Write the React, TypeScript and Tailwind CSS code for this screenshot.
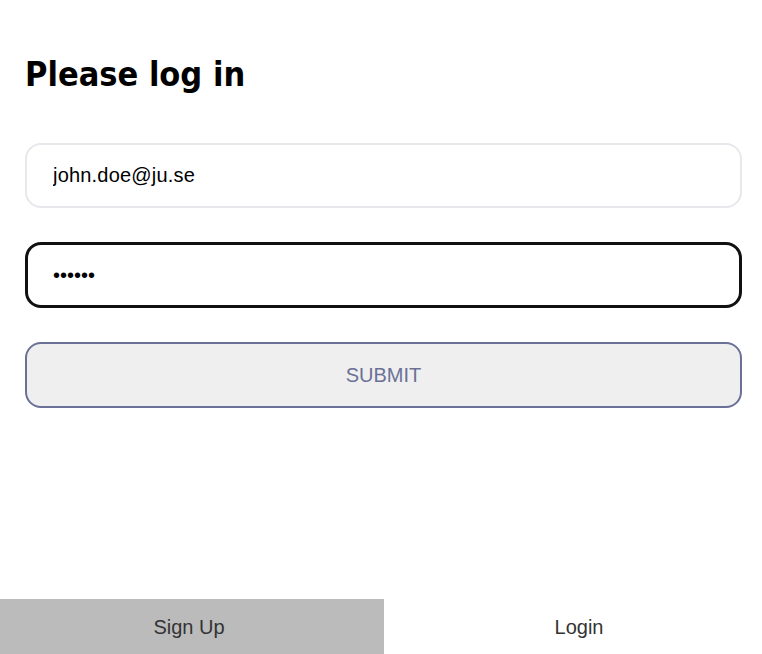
import React, { useState } from 'react'

export default function App() {
  const [email, setEmail] = useState('john.doe@ju.se')
  const [password, setPassword] = useState('secret')
  const [tab, setTab] = useState<'signup' | 'login'>('login')

  return (
    <div className="flex h-[654px] w-[762px] flex-col bg-white font-['Liberation_Sans',Arial,sans-serif]">
      <form
        className="flex flex-1 flex-col pl-[25px] pr-[20px]"
        onSubmit={(e) => {
          e.preventDefault()
        }}
      >
        <h1 className="mt-[52px] font-['DejaVu_Sans_Condensed','DejaVu_Sans',sans-serif] text-[34px] font-bold leading-[44px] text-black">
          Please log in
        </h1>

        <input
          type="email"
          value={email}
          onChange={(e) => setEmail(e.target.value)}
          className="mt-[47px] h-[65px] w-full rounded-[16px] border-2 border-[#e8e8ec] bg-white px-[26px] text-[20px] tracking-[0.2px] text-black outline-none"
        />
        <input
          type="password"
          value={password}
          onChange={(e) => setPassword(e.target.value)}
          className="mt-[34px] h-[66px] w-full rounded-[16px] border-[3px] border-[#111] bg-white px-[25px] text-[20px] text-black outline-none"
        />
        <button
          type="submit"
          className="mt-[34px] h-[66px] w-full rounded-[16px] border-2 border-[#6b7196] bg-[#efefef] text-[20px] text-[#6b7196]"
        >
          SUBMIT
        </button>
      </form>

      <div className="flex h-[55px]">
        <button
          onClick={() => setTab('signup')}
          className={`w-[384px] pr-[6px] text-[20px] text-[#333] ${tab === 'signup' ? 'bg-white' : 'bg-[#bbbbbb]'}`}
        >
          Sign Up
        </button>
        <button
          onClick={() => setTab('login')}
          className={`flex-1 pl-[12px] text-[20px] text-[#333] ${tab === 'login' ? 'bg-white' : 'bg-[#bbbbbb]'}`}
        >
          Login
        </button>
      </div>
    </div>
  )
}
